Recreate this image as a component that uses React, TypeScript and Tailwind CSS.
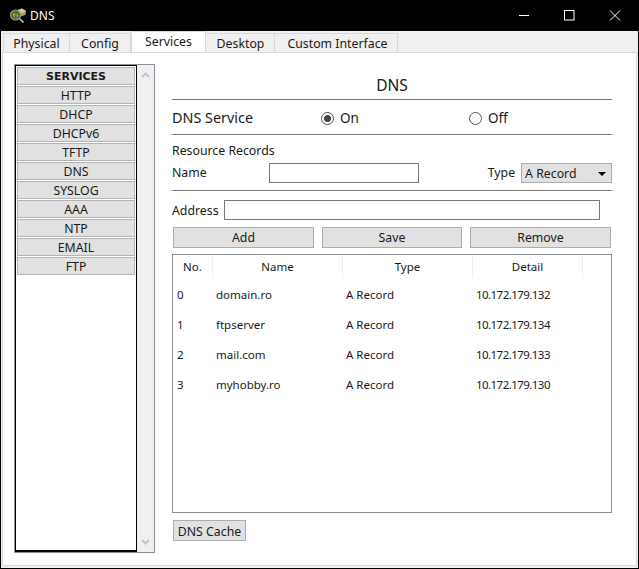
const services = ["HTTP", "DHCP", "DHCPv6", "TFTP", "DNS", "SYSLOG", "AAA", "NTP", "EMAIL", "FTP"];

const records = [
  { no: 0, name: "domain.ro", type: "A Record", detail: "10.172.179.132" },
  { no: 1, name: "ftpserver", type: "A Record", detail: "10.172.179.134" },
  { no: 2, name: "mail.com", type: "A Record", detail: "10.172.179.133" },
  { no: 3, name: "myhobby.ro", type: "A Record", detail: "10.172.179.130" },
];

function Logo() {
  return (
    <svg width="18" height="18" viewBox="0 0 18 18" className="shrink-0">
      <path d="M6 4 L13 1.5 L17 4 L16.5 8 L10 10 Z" fill="#b59a5a" />
      <path d="M6 4 L13 6 L17 4 L13 1.5 Z" fill="#d8c48a" />
      <path d="M10.5 11.5 L14.5 15.5" stroke="#c8c8c8" strokeWidth="1.6" />
      <circle cx="6.5" cy="8" r="5" fill="#3f6b2e" stroke="#9a9a9a" strokeWidth="1.2" />
      <circle cx="6.5" cy="8" r="2.6" fill="#d9c22e" />
      <path d="M5.2 6.4 H7.8 V8 H5.6 V9.6 H8" fill="none" stroke="#2b3a10" strokeWidth="0.8" />
    </svg>
  );
}

function WindowButtons() {
  return (
    <div className="flex items-center text-white">
      <svg width="46" height="12" viewBox="0 0 46 12" className="block">
        <path d="M19 5.5 H29" stroke="#fff" strokeWidth="1" />
      </svg>
      <svg width="46" height="12" viewBox="0 0 46 12" className="block">
        <rect x="18.5" y="0.5" width="9.5" height="9.5" fill="none" stroke="#fff" strokeWidth="1" />
      </svg>
      <svg width="46" height="12" viewBox="0 0 46 12" className="block">
        <path d="M18 0.5 L28 10.5 M28 0.5 L18 10.5" stroke="#fff" strokeWidth="1" />
      </svg>
    </div>
  );
}

function Radio({ checked, label, className }: { checked?: boolean; label: string; className: string }) {
  return (
    <div className={`flex items-center gap-[6px] ${className}`}>
      <span className="flex h-[13px] w-[13px] items-center justify-center rounded-full border border-[#555] bg-white">
        {checked && <span className="h-[7px] w-[7px] rounded-full bg-[#444]" />}
      </span>
      <span className="text-[13.5px]">{label}</span>
    </div>
  );
}

function Chevron({ down }: { down?: boolean }) {
  return (
    <svg width="9" height="6" viewBox="0 0 9 6" className="block">
      <path d={down ? "M1 1 L4.5 4.5 L8 1" : "M1 5 L4.5 1.5 L8 5"} fill="none" stroke="#c4c4c4" strokeWidth="2" />
    </svg>
  );
}

export default function App() {
  return (
    <div className="flex h-[569px] w-[639px] flex-col bg-black font-['Noto_Sans','DejaVu_Sans',sans-serif] text-[12.3px] leading-none text-[#1a1a1a]">
      <div className="flex h-[31px] shrink-0 items-center pl-[9px] text-white">
        <Logo />
        <span className="ml-[3px] text-[12px]">DNS</span>
        <div className="ml-auto pr-[1px]">
          <WindowButtons />
        </div>
      </div>

      <div className="mx-[1px] mb-[1px] flex min-h-0 flex-1 flex-col bg-[#f0f0f0] px-[1px] pb-[2px]">
        <div className="flex h-[21px] shrink-0 items-end pl-[1px]">
          <div className="flex h-[19px] w-[67px] items-center justify-center border border-b-0 border-[#d9d9d9] bg-[#f0f0f0] pt-[2px]">Physical</div>
          <div className="flex h-[19px] w-[61px] items-center justify-center border border-b-0 border-l-0 border-[#d9d9d9] bg-[#f0f0f0] pt-[2px]">Config</div>
          <div className="flex h-[21px] w-[75px] items-center justify-center border-x border-t border-[#d9d9d9] bg-white">Services</div>
          <div className="flex h-[19px] w-[69px] items-center justify-center border border-b-0 border-l-0 border-[#d9d9d9] bg-[#f0f0f0] pl-[1px] pt-[2px]">Desktop</div>
          <div className="flex h-[19px] w-[123px] items-center justify-center border border-b-0 border-l-0 border-[#d9d9d9] bg-[#f0f0f0] pl-[3px] pt-[2px]">Custom Interface</div>
        </div>

        <div className="flex min-h-0 flex-1 items-start border border-[#d9d9d9] bg-white pl-[11px] pr-[22px] pt-[11px]">
          <div className="flex h-[489px] w-[141px] shrink-0 border border-[#8a8f99]">
            <div className="flex w-[122px] flex-col gap-[1px] border border-b-2 border-black px-[1px] pt-[1px]">
              <div className="flex h-[18px] items-center justify-center border border-[#b4b4b4] bg-[#e1e1e1] font-['DejaVu_Sans',sans-serif] text-[11px] font-bold">SERVICES</div>
              {services.map((s) => (
                <div key={s} className="flex h-[18px] items-center justify-center border border-[#b4b4b4] bg-[#e1e1e1] pt-[2px]">
                  {s}
                </div>
              ))}
            </div>
            <div className="flex flex-1 flex-col items-center justify-between bg-[#f0f0f0] py-[7px]">
              <Chevron />
              <Chevron down />
            </div>
          </div>

          <div className="ml-[17px] flex w-[440px] shrink-0 flex-col">
            <div className="flex h-[36px] items-end justify-center border-b border-[#777] pb-[6px] text-[15.5px]">DNS</div>

            <div className="flex h-[35px] items-center border-b border-[#777] pt-[3px] text-[14.4px]">
              <span className="w-[149px]">DNS Service</span>
              <Radio checked label="On" className="w-[148px]" />
              <Radio label="Off" className="" />
            </div>

            <div className="flex h-[28px] items-center pt-[4px]">Resource Records</div>

            <div className="flex h-[28px] items-start border-b border-[#777]">
              <span className="w-[97px] pt-[4px]">Name</span>
              <div className="h-[20px] w-[150px] border border-[#777] bg-white" />
              <span className="ml-[69px] pt-[4px]">Type</span>
              <div className="ml-[6px] flex h-[20px] w-[91px] items-center border border-[#adadad] bg-[#e1e1e1] pl-[3px] pr-[5px] pt-[2px]">
                A Record
                <span className="ml-auto h-0 w-0 border-x-[4px] border-t-[4px] border-x-transparent border-t-black" />
              </div>
            </div>

            <div className="mt-[9px] flex h-[20px] items-center">
              <span className="w-[52px] pt-[2px]">Address</span>
              <div className="h-[20px] w-[376px] border border-[#777] bg-white" />
            </div>

            <div className="mt-[7px] flex h-[21px] pl-[1px]">
              <div className="flex w-[141px] items-center justify-center border border-[#adadad] bg-[#e1e1e1] pt-[2px]">Add</div>
              <div className="ml-[8px] flex w-[140px] items-center justify-center border border-[#adadad] bg-[#e1e1e1] pt-[2px]">Save</div>
              <div className="ml-[8px] flex w-[141px] items-center justify-center border border-[#adadad] bg-[#e1e1e1] pt-[2px]">Remove</div>
            </div>

            <div className="mt-[6px] h-[259px] border border-[#8a8f99] bg-white text-[11.5px]">
              <div className="flex h-[23px] items-center">
                <div className="flex h-full w-[40px] items-center justify-center border-r border-[#eeeeee]">No.</div>
                <div className="flex h-full w-[130px] items-center justify-center border-r border-[#eeeeee]">Name</div>
                <div className="flex h-full w-[130px] items-center justify-center border-r border-[#eeeeee]">Type</div>
                <div className="flex h-full w-[110px] items-center justify-center border-r border-[#eeeeee]">Detail</div>
              </div>
              <div className="pt-[2px]">
                {records.map((r) => (
                  <div key={r.no} className="flex h-[30px] items-center">
                    <span className="w-[40px] pl-[4px]">{r.no}</span>
                    <span className="w-[130px] pl-[3px]">{r.name}</span>
                    <span className="w-[130px] pl-[3px]">{r.type}</span>
                    <span className="pl-[3px] tracking-[-0.55px]">{r.detail}</span>
                  </div>
                ))}
              </div>
            </div>

            <div className="ml-[1px] mt-[7px] flex h-[21px] w-[73px] items-center justify-center border border-[#adadad] bg-[#e1e1e1] pt-[3px]">DNS Cache</div>
          </div>
        </div>
      </div>
    </div>
  );
}
